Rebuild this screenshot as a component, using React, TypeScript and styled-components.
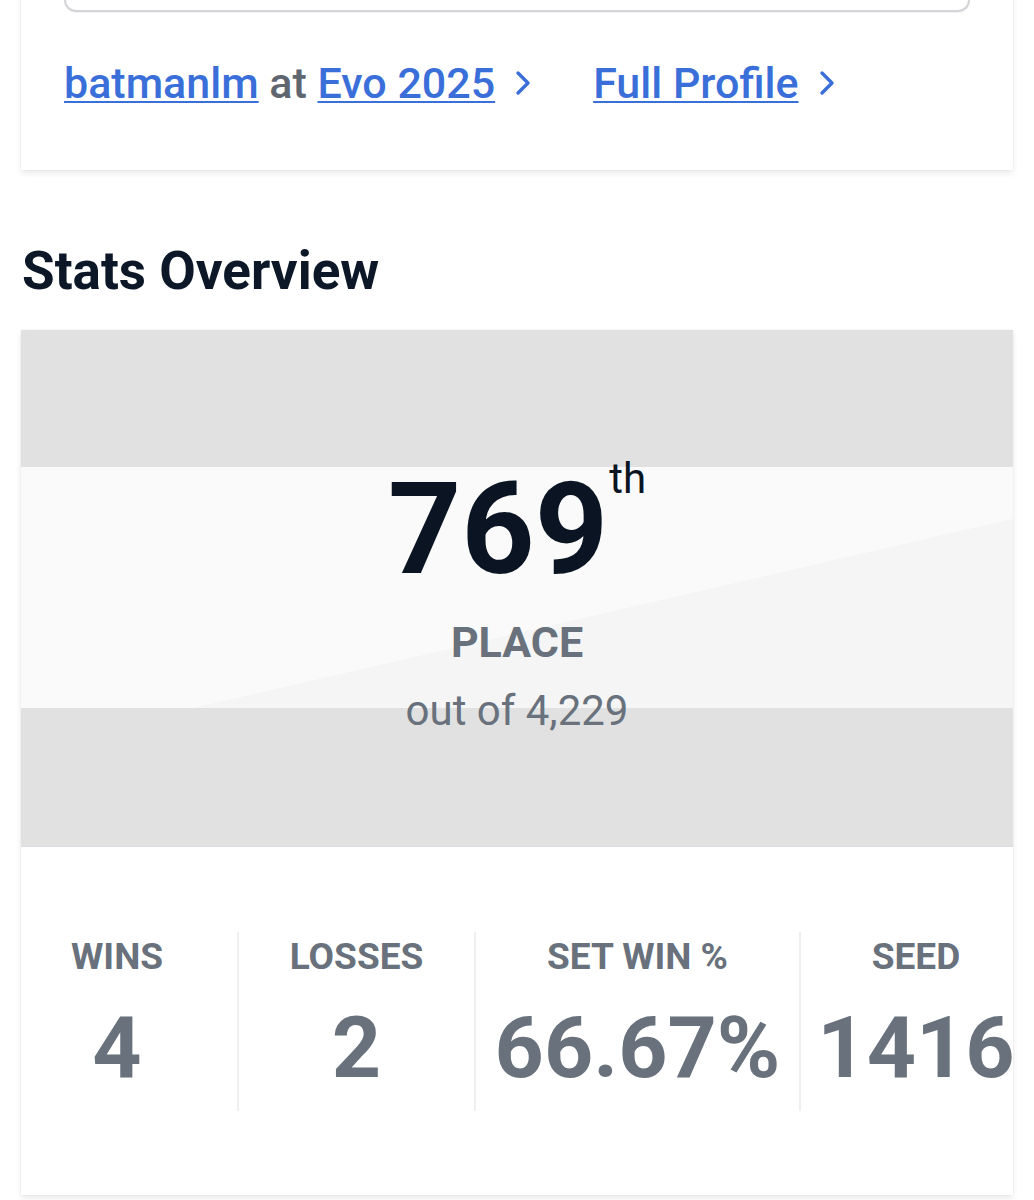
import React from 'react';
import styled, { createGlobalStyle } from 'styled-components';

const GlobalStyle = createGlobalStyle`
  html, body {
    margin: 0;
    padding: 0;
    background: #ffffff;
  }
  body {
    font-family: Roboto, "Noto Sans", "Liberation Sans", sans-serif;
    -webkit-font-smoothing: antialiased;
  }
`;

const Page = styled.div`
  width: 1034px;
  padding: 0 21px 40px;
  box-sizing: border-box;
  margin-top: -60px;
`;

const Card = styled.section`
  background: #ffffff;
  box-shadow: 0 3px 6px rgba(0, 0, 0, 0.09), 0 0 2px rgba(0, 0, 0, 0.05);
`;

const LinksCard = styled(Card)`
  padding: 0 43px 62px;
`;

const SearchBox = styled.div`
  height: 70px;
  border: 2px solid #d2d4d7;
  border-top: none;
  border-radius: 0 0 12px 12px;
  box-shadow: 0 1px 1px rgba(0, 0, 0, 0.06);
`;

const LinkRow = styled.div`
  display: flex;
  align-items: center;
  margin-top: 46px;
  font-size: 43px;
  font-weight: 500;
  line-height: 1.172;
`;

const LinkGroup = styled.div<{ $gap?: number }>`
  display: flex;
  align-items: center;
  margin-right: ${p => p.$gap ?? 0}px;
`;

const Link = styled.a`
  color: #3a6fd9;
  text-decoration: underline;
  text-decoration-thickness: 2px;
  text-underline-offset: 3px;
`;

const Muted = styled.span`
  color: #5f6670;
`;

const Chevron = styled.svg`
  margin-left: 20px;
  flex: none;
`;

const SectionTitle = styled.h2`
  margin: 70px 0 27px 1px;
  font-size: 53px;
  font-weight: 700;
  color: #0c1727;
  line-height: 1.172;
`;

const Hero = styled.div`
  height: 517px;
  box-sizing: border-box;
  padding-top: 135px;
  display: flex;
  flex-direction: column;
  align-items: center;
  background:
    linear-gradient(to bottom, #e1e1e1 0 137px, transparent 137px 378px, #e1e1e1 378px 516px, #d9dce0 516px),
    linear-gradient(-13deg, #f5f5f5 0 44%, #fafafa 44% 100%);
`;

const RankRow = styled.div`
  display: flex;
  align-items: flex-start;
`;

const RankNumber = styled.span`
  font-size: 128px;
  font-weight: 700;
  line-height: 1;
  color: #0a1422;
`;

const RankSuffix = styled.span`
  font-size: 42px;
  font-weight: 400;
  line-height: 1;
  color: #0a1422;
  margin: -7px 0 0 1px;
`;

const PlaceLabel = styled.div`
  margin-top: 24px;
  font-size: 43px;
  font-weight: 700;
  color: #68717c;
  line-height: 1.172;
`;

const OutOf = styled.div`
  margin-top: 19px;
  font-size: 42px;
  font-weight: 400;
  color: #68717c;
  line-height: 1.172;
`;

const StatsBody = styled.div`
  padding: 85px 0 84px;
`;

const StatsRow = styled.div`
  display: grid;
  grid-template-columns: 240px 237px 325px 232px;
  margin: 0 -18px 0 -24px;
`;

const StatCell = styled.div<{ $divider: boolean }>`
  display: flex;
  flex-direction: column;
  align-items: center;
  padding: 3px 0 12px;
  border-left: ${p => (p.$divider ? '2px solid #eeeff1' : 'none')};
`;

const StatLabel = styled.div`
  font-size: 37px;
  font-weight: 700;
  color: #68717c;
  line-height: 1.172;
`;

const StatValue = styled.div`
  margin-top: 20px;
  font-size: 86px;
  font-weight: 700;
  color: #68717c;
  line-height: 1.172;
  white-space: nowrap;
`;

const ChevronIcon = () => (
  <Chevron width="16" height="28" viewBox="0 0 16 28">
    <polyline points="3,4 13,14 3,24" fill="none" stroke="#3a6fd9" strokeWidth="3.4" strokeLinecap="round" strokeLinejoin="round" />
  </Chevron>
);

const stats = [
  { label: 'WINS', value: '4' },
  { label: 'LOSSES', value: '2' },
  { label: 'SET WIN %', value: '66.67%' },
  { label: 'SEED', value: '1416' },
];

export default function App() {
  return (
    <>
      <GlobalStyle />
      <Page>
        <LinksCard>
          <SearchBox />
          <LinkRow>
            <LinkGroup $gap={62}>
              <Link href="#">batmanlm</Link>
              <Muted>&nbsp;at&nbsp;</Muted>
              <Link href="#">Evo 2025</Link>
              <ChevronIcon />
            </LinkGroup>
            <LinkGroup>
              <Link href="#">Full Profile</Link>
              <ChevronIcon />
            </LinkGroup>
          </LinkRow>
        </LinksCard>

        <SectionTitle>Stats Overview</SectionTitle>

        <Card>
          <Hero>
            <RankRow>
              <RankNumber>769</RankNumber>
              <RankSuffix>th</RankSuffix>
            </RankRow>
            <PlaceLabel>PLACE</PlaceLabel>
            <OutOf>out of 4,229</OutOf>
          </Hero>
          <StatsBody>
            <StatsRow>
              {stats.map((s, i) => (
                <StatCell key={s.label} $divider={i > 0}>
                  <StatLabel>{s.label}</StatLabel>
                  <StatValue>{s.value}</StatValue>
                </StatCell>
              ))}
            </StatsRow>
          </StatsBody>
        </Card>
      </Page>
    </>
  );
}
